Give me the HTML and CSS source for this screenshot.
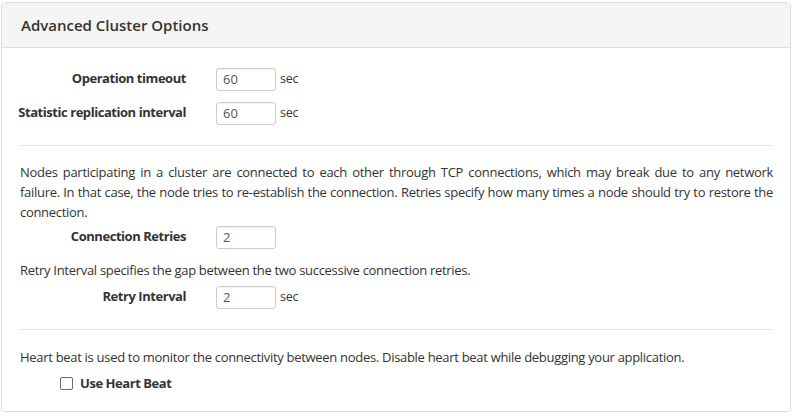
FILE: index.html
```html
<!DOCTYPE html>
<html>
<head>
<meta charset="utf-8">
<link rel="stylesheet" href="styles.css">
</head>
<body>
<div class="card">
  <div class="card-header">Advanced Cluster Options</div>
  <div class="card-body">
    <div class="row first">
      <label class="lbl">Operation timeout</label>
      <input class="field" type="text" value="60">
      <span class="unit">sec</span>
    </div>
    <div class="row second">
      <label class="lbl">Statistic replication interval</label>
      <input class="field" type="text" value="60">
      <span class="unit">sec</span>
    </div>
    <hr class="sep sep-one">
    <p class="para para-nodes">Nodes participating in a cluster are connected to each other through TCP connections, which may break due to any network failure. In that case, the node tries to re-establish the connection. Retries specify how many times a node should try to restore the connection.</p>
    <div class="row retries">
      <label class="lbl">Connection Retries</label>
      <input class="field" type="text" value="2">
    </div>
    <p class="para para-interval">Retry Interval specifies the gap between the two successive connection retries.</p>
    <div class="row interval">
      <label class="lbl">Retry Interval</label>
      <input class="field" type="text" value="2">
      <span class="unit">sec</span>
    </div>
    <hr class="sep sep-two">
    <p class="para para-heart">Heart beat is used to monitor the connectivity between nodes. Disable heart beat while debugging your application.</p>
    <div class="check-row">
      <input class="check" type="checkbox" id="hb">
      <label class="check-label" for="hb">Use Heart Beat</label>
    </div>
  </div>
</div>
</body>
</html>
```
FILE: styles.css
```css
html, body {
  margin: 0;
  padding: 0;
  background: #ffffff;
}
body {
  font-family: "Open Sans", "Noto Sans", sans-serif;
  font-size: 13px;
  letter-spacing: -0.3px;
  color: #333333;
}
.card {
  box-sizing: border-box;
  margin: 2px 0 0 1px;
  width: 790px;
  height: 410px;
  border: 1px solid #dddddd;
  border-radius: 4px;
  overflow: hidden;
}
.card-header {
  box-sizing: border-box;
  height: 45px;
  padding: 0 19px;
  background: #f5f5f5;
  border-bottom: 1px solid #dddddd;
  font-size: 15px;
  font-weight: 600;
  letter-spacing: 0;
  line-height: 44px;
  color: #333333;
}
.card-body {
  padding: 20px 17px 0 18px;
}
.row {
  display: flex;
  align-items: center;
  height: 23px;
}
.row.first { margin-top: 0; }
.row.second { margin-top: 11px; }
.row.retries { margin-top: 4px; }
.row.interval { margin-top: 6px; }
.lbl {
  width: 166px;
  flex: none;
  display: flex;
  justify-content: flex-end;
  white-space: nowrap;
  font-weight: 700;
  letter-spacing: -0.45px;
  margin-right: 30px;
  padding-bottom: 4px;
}
.field {
  box-sizing: border-box;
  width: 60px;
  height: 23px;
  border: 1px solid #cccccc;
  border-radius: 3px;
  padding: 0 6px 2px 6px;
  font-family: inherit;
  font-size: 13px;
  color: #555555;
  box-shadow: inset 0 1px 1px rgba(0,0,0,0.06);
  margin: 0;
}
.unit {
  margin-left: 4px;
  font-size: 12.5px;
  padding-bottom: 3px;
}
.sep {
  border: 0;
  border-top: 1px solid #e5e5e5;
  margin: 0;
}
.sep-one { margin-top: 20px; }
.sep-two { margin-top: 20px; }
.para {
  margin: 0;
  line-height: 20px;
  text-align: justify;
}
.para-nodes { margin-top: 16px; }
.para-interval { margin-top: 11px; }
.para-heart { margin-top: 17px; }
.check-row {
  display: flex;
  align-items: center;
  height: 20px;
  margin-top: 6px;
  padding-left: 40px;
}
.check {
  appearance: none;
  -webkit-appearance: none;
  box-sizing: border-box;
  width: 13px;
  height: 13px;
  margin: 0 7px 0 0;
  border: 1px solid #6d6d6d;
  border-radius: 2px;
  background: #ffffff;
}
.check-label {
  font-weight: 700;
  letter-spacing: -0.45px;
}
```
